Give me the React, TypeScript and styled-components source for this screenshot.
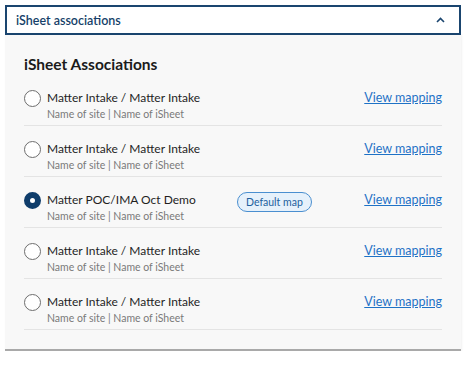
import React from 'react';
import styled, { createGlobalStyle } from 'styled-components';

const GlobalStyle = createGlobalStyle`
  body {
    margin: 0;
    background: #ffffff;
    font-family: Lato, "Noto Sans", sans-serif;
  }
`;

const Page = styled.div`
  padding: 5px 6px 0 5px;
`;

const Header = styled.button`
  width: 100%;
  height: 30px;
  display: flex;
  align-items: center;
  justify-content: space-between;
  padding: 0 14px 0 9px;
  box-sizing: border-box;
  border: 2px solid #1a456f;
  background: #ffffff;
  color: #163f69;
  font-family: inherit;
  font-size: 12.5px;
  font-weight: 600;
  cursor: pointer;
`;

const Panel = styled.div`
  background: #f8f8f8;
  padding: 20px 19px 19px 19px;
  border-bottom: 2px solid #a9a9a9;
  box-shadow: 1px 0 2px rgba(0, 0, 0, 0.06);
`;

const Title = styled.h3`
  margin: 0 0 2px 0;
  font-size: 15.5px;
  font-weight: 700;
  color: #1b1b1b;
`;

const Row = styled.div`
  display: flex;
  align-items: flex-start;
  height: 51px;
  box-sizing: border-box;
  padding-top: 14px;
  border-bottom: 1px solid #e4e4e4;
`;

const Radio = styled.span<{ checked?: boolean }>`
  width: 17px;
  height: 17px;
  border-radius: 50%;
  box-sizing: border-box;
  flex-shrink: 0;
  margin-top: 1px;
  margin-right: 6px;
  border: ${(p) => (p.checked ? '6px solid #0f3d6b' : '1px solid #6e6e6e')};
  background: #ffffff;
`;

const Texts = styled.div`
  display: flex;
  flex-direction: column;
  width: 190px;
`;

const Name = styled.span`
  font-size: 12px;
  line-height: 18px;
  color: #1f1f1f;
`;

const Sub = styled.span`
  font-size: 10.5px;
  line-height: 15px;
  color: #7a7a7a;
`;

const Badge = styled.span`
  margin-top: 1px;
  padding: 0 8px;
  height: 20px;
  line-height: 18px;
  box-sizing: border-box;
  border: 1px solid #4a8fd0;
  border-radius: 10px;
  background: #e6f1fb;
  color: #1d5f9e;
  font-size: 10.5px;
`;

const Link = styled.a`
  margin-left: auto;
  font-size: 12.5px;
  line-height: 18px;
  color: #1f72c6;
  text-decoration: underline;
  cursor: pointer;
`;

const rows = [
  { name: 'Matter Intake / Matter Intake', checked: false, isDefault: false },
  { name: 'Matter Intake / Matter Intake', checked: false, isDefault: false },
  { name: 'Matter POC/IMA Oct Demo', checked: true, isDefault: true },
  { name: 'Matter Intake / Matter Intake', checked: false, isDefault: false },
  { name: 'Matter Intake / Matter Intake', checked: false, isDefault: false },
];

export default function App() {
  return (
    <Page>
      <GlobalStyle />
      <Header>
        <span>iSheet associations</span>
        <svg width="9" height="6" viewBox="0 0 9 6">
          <path d="M1 5 L4.5 1.5 L8 5" fill="none" stroke="#1a456f" strokeWidth="1.6" />
        </svg>
      </Header>
      <Panel>
        <Title>iSheet Associations</Title>
        <div>
          {rows.map((r, i) => (
            <Row key={i}>
              <Radio checked={r.checked} />
              <Texts>
                <Name>{r.name}</Name>
                <Sub>Name of site | Name of iSheet</Sub>
              </Texts>
              {r.isDefault && <Badge>Default map</Badge>}
              <Link>View mapping</Link>
            </Row>
          ))}
        </div>
      </Panel>
    </Page>
  );
}
